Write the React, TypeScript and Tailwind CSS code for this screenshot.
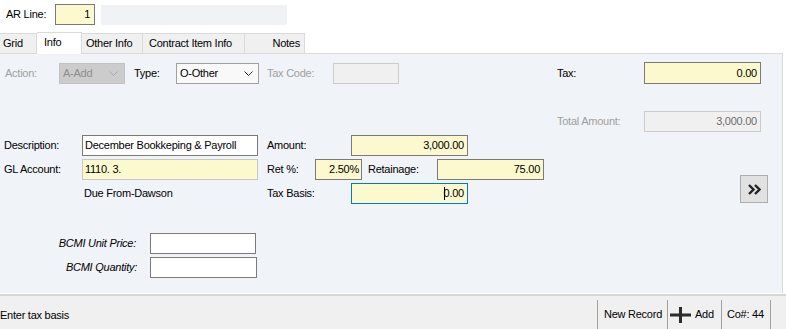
import React from "react";

const Chevron = ({ color }: { color: string }) => (
  <svg width="9" height="5" viewBox="0 0 9 5" className="shrink-0">
    <polyline points="0.5,0.5 4.5,4.5 8.5,0.5" fill="none" stroke={color} strokeWidth="1" />
  </svg>
);

export default function App() {
  return (
    <div className="w-[786px] h-[329px] bg-white overflow-hidden font-['Liberation_Sans',Arial,sans-serif] text-[11px] tracking-[-0.25px] text-black leading-none flex flex-col">
      {/* top row */}
      <div className="flex items-center pt-[4px] h-[25px] shrink-0">
        <div className="w-[55px] pl-[6px]">AR Line:</div>
        <div className="w-[40px] h-[21px] border border-[#7a7a7a] bg-[#fdf9cf] flex items-center justify-end pr-[4px]">1</div>
        <div className="ml-[6px] w-[186px] h-[20px] bg-[#f0f2f5]" />
      </div>

      {/* tabs */}
      <div className="flex items-end h-[21px] mt-[7px] shrink-0">
        <div className="w-[37px] h-[20px] bg-[#f0f0f0] border-t border-r border-[#dadada] flex items-center pl-[3px]">Grid</div>
        <div className="relative z-10 w-[45px] h-[22px] -mb-[1px] bg-white border-t border-r border-[#dadada] flex items-start pt-[4px] pl-[7px]">Info</div>
        <div className="w-[61px] h-[20px] bg-[#f0f0f0] border-t border-r border-[#dadada] flex items-center pl-[4px]">Other Info</div>
        <div className="w-[102px] h-[20px] bg-[#f0f0f0] border-t border-r border-[#dadada] flex items-center pl-[6px]">Contract Item Info</div>
        <div className="w-[60px] h-[20px] bg-[#f0f0f0] border-t border-r border-[#dadada] flex items-center justify-end pr-[4px]">Notes</div>
      </div>

      {/* panel */}
      <div className="w-[783px] h-[240px] shrink-0 bg-[#f0f3f7] border-t border-r border-[#dadada] flex flex-col">
        {/* row 1 */}
        <div className="flex items-center h-[22px] mt-[8px]">
          <div className="w-[59px] pl-[5px] text-[#a0a0a0]">Action:</div>
          <div className="w-[66px] h-[21px] bg-[#cccccc] border border-[#c2c2c2] flex items-center pl-[3px] pr-[6px] justify-between text-[#8c8c8c]">
            <span>A-Add</span>
            <Chevron color="#a8a8a8" />
          </div>
          <div className="w-[51px] pl-[9px]">Type:</div>
          <div className="w-[83px] h-[21px] bg-[#f9f9f9] border border-[#a0a0a0] flex items-center pl-[3px] pr-[5px] justify-between">
            <span>O-Other</span>
            <Chevron color="#333333" />
          </div>
          <div className="w-[74px] pl-[8px] text-[#a0a0a0]">Tax Code:</div>
          <div className="w-[66px] h-[21px] bg-[#f0f0f0] border border-[#cccccc]" />
          <div className="ml-[158px] w-[87px]">Tax:</div>
          <div className="w-[117px] h-[22px] bg-[#fdf9cf] border border-[#7a7a7a] flex items-center justify-end pr-[3px]">0.00</div>
        </div>

        {/* row 2 */}
        <div className="flex items-center h-[21px] mt-[27px]">
          <div className="ml-[557px] w-[87px] text-[#a0a0a0]">Total Amount:</div>
          <div className="w-[117px] h-[21px] bg-[#f0f0f0] border border-[#cccccc] flex items-center justify-end pr-[3px] text-[#6d6d6d]">3,000.00</div>
        </div>

        {/* row 3 */}
        <div className="flex items-center h-[21px] mt-[3px]">
          <div className="w-[82px] pl-[4px]">Description:</div>
          <div className="w-[176px] h-[21px] bg-white border border-[#7a7a7a] flex items-center pl-[2px]">December Bookkeping &amp; Payroll</div>
          <div className="w-[93px] pl-[9px]">Amount:</div>
          <div className="w-[117px] h-[21px] bg-[#fdf9cf] border border-[#7a7a7a] flex items-center justify-end pr-[3px]">3,000.00</div>
        </div>

        {/* row 4 */}
        <div className="flex items-center h-[21px] mt-[3px]">
          <div className="w-[82px] pl-[4px]">GL Account:</div>
          <div className="w-[176px] h-[21px] bg-[#fdf9cf] border border-[#c8c8c8] flex items-center pl-[2px]">1110. 3.</div>
          <div className="w-[57px] pl-[9px]">Ret %:</div>
          <div className="w-[47px] h-[21px] bg-[#fdf9cf] border border-[#7a7a7a] flex items-center justify-end pr-[2px]">2.50%</div>
          <div className="w-[75px] pl-[6px]">Retainage:</div>
          <div className="w-[107px] h-[21px] bg-[#fdf9cf] border border-[#7a7a7a] flex items-center justify-end pr-[3px]">75.00</div>
        </div>

        {/* row 5 */}
        <div className="flex items-center h-[21px] mt-[3px]">
          <div className="w-[82px]" />
          <div className="w-[176px] pl-[2px]">Due From-Dawson</div>
          <div className="w-[93px] pl-[9px]">Tax Basis:</div>
          <div className="w-[117px] h-[21px] bg-[#fdf9cf] border border-[#0078d7] flex items-center justify-end pr-[3px]">
            <span className="inline-block w-px h-[13px] bg-black -mr-[1px]" />
            <span>0.00</span>
          </div>
          <div className="ml-[272px] self-start -mt-[8px] w-[28px] h-[28px] bg-[#e1e1e1] border border-[#adadad] flex items-center justify-center">
            <svg width="13" height="11" viewBox="0 0 13 11">
              <polyline points="1,1 5.5,5.5 1,10" fill="none" stroke="#222" strokeWidth="2.4" />
              <polyline points="7,1 11.5,5.5 7,10" fill="none" stroke="#222" strokeWidth="2.4" />
            </svg>
          </div>
        </div>

        {/* row 6 */}
        <div className="flex items-center h-[21px] mt-[29px]">
          <div className="w-[150px] pr-[14px] text-right italic">BCMI Unit Price:</div>
          <div className="w-[106px] h-[21px] bg-white border border-[#7a7a7a]" />
        </div>

        {/* row 7 */}
        <div className="flex items-center h-[21px] mt-[3px]">
          <div className="w-[150px] pr-[13px] text-right italic">BCMI Quantity:</div>
          <div className="w-[107px] h-[21px] bg-white border border-[#7a7a7a]" />
        </div>
      </div>

      {/* separator */}
      <div className="h-[1px] bg-white shrink-0" />
      <div className="h-[2px] bg-[#d6d6d6] shrink-0" />

      {/* status bar */}
      <div className="flex-1 bg-[#f0f0f0] flex items-stretch">
        <div className="flex items-center pt-[5px]">Enter tax basis</div>
        <div className="ml-auto mr-[15px] flex items-stretch mt-[4px]">
          <div className="w-[70px] border-l border-[#a0a0a0] flex items-center pl-[6px]">New Record</div>
          <div className="w-[54px] border-l border-[#a0a0a0] flex items-center pl-[2px] gap-[4px]">
            <svg width="21" height="16" viewBox="0 0 21 16">
              <rect x="0" y="6.5" width="21" height="3" fill="#2b2b2b" />
              <rect x="9" y="0" width="3" height="16" fill="#2b2b2b" />
            </svg>
            <span>Add</span>
          </div>
          <div className="w-[50px] border-l border-r border-[#a0a0a0] flex items-center pl-[5px]">Co#: 44</div>
        </div>
      </div>
    </div>
  );
}
